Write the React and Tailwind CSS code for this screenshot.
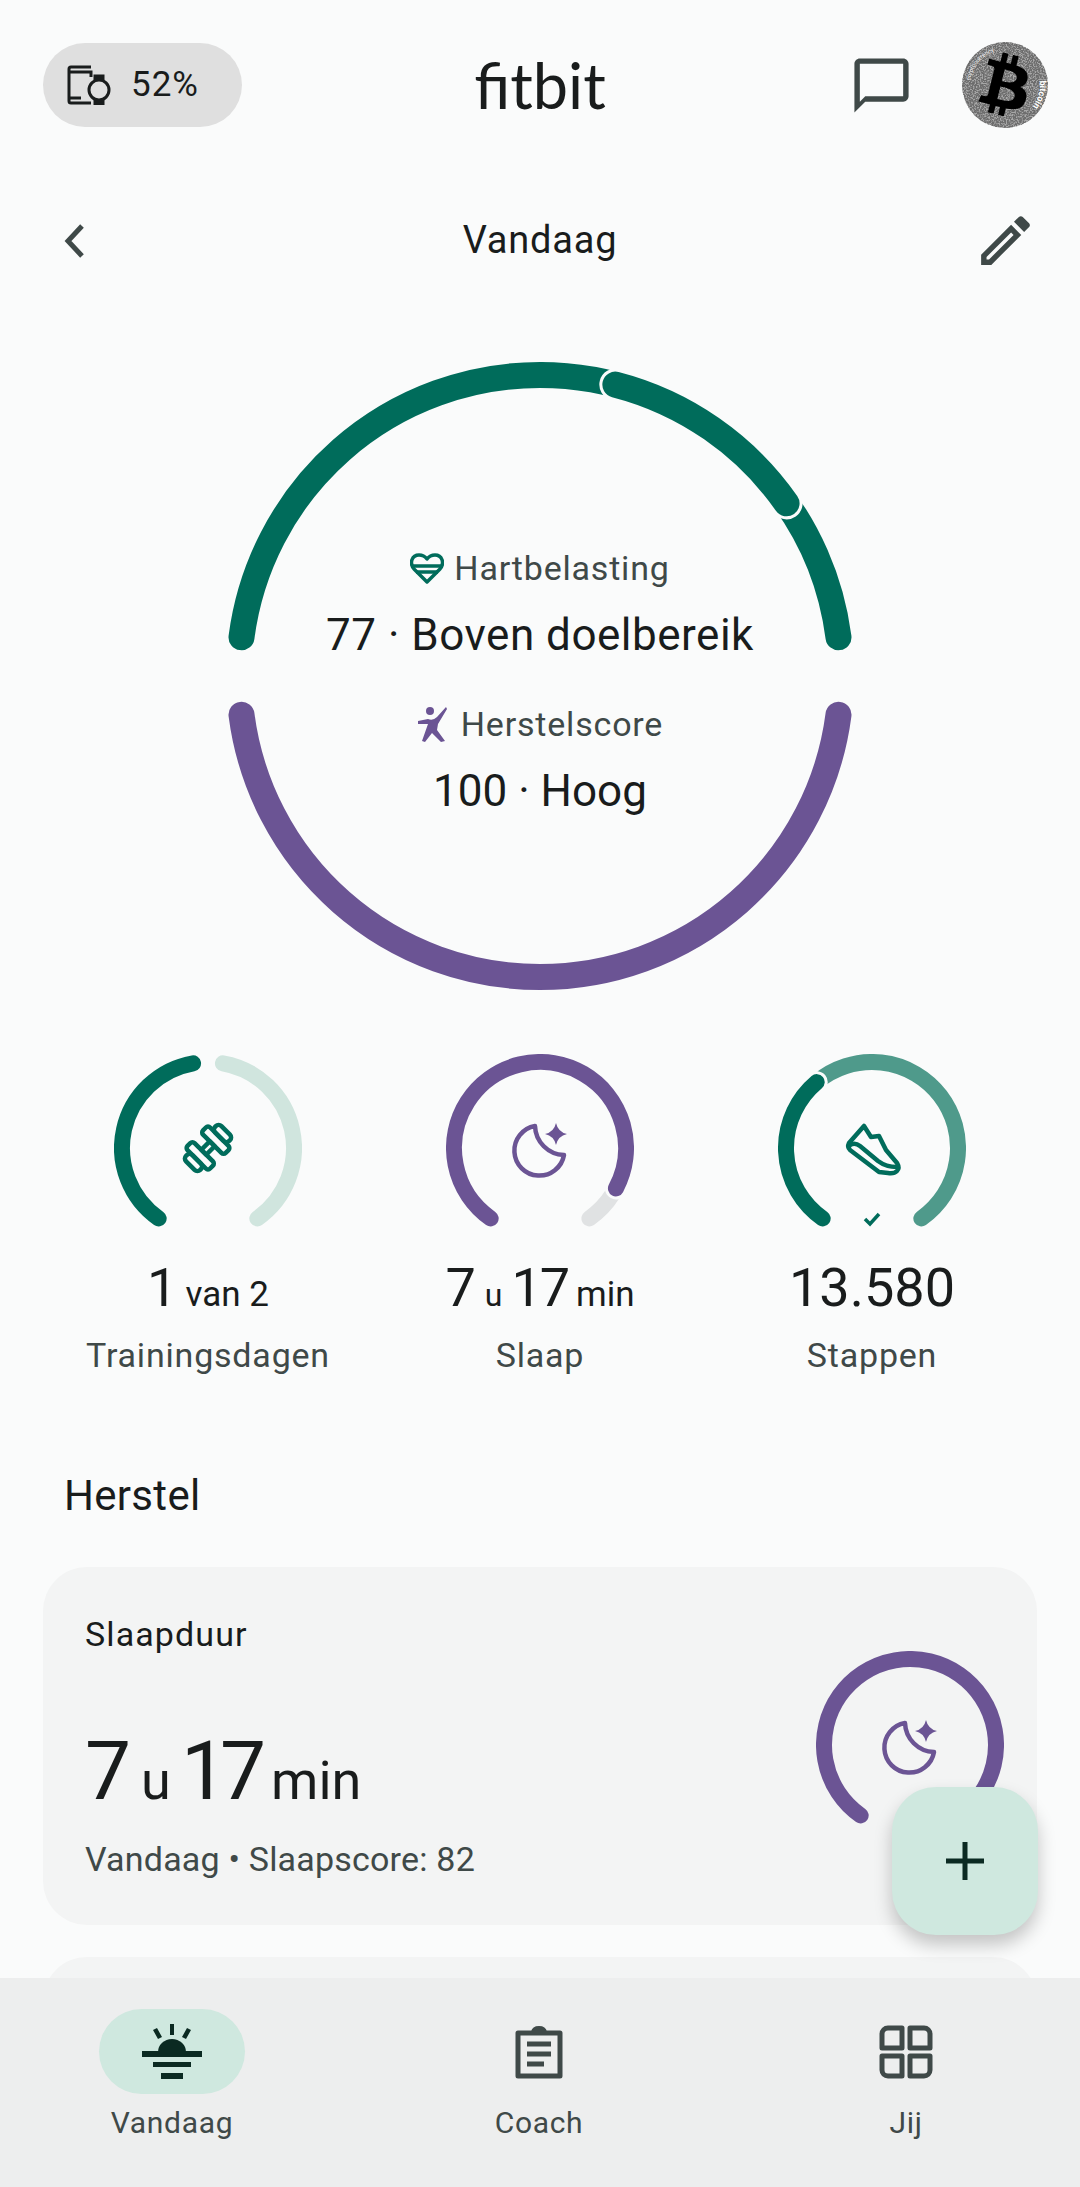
import React from "react";
import { FaBtc } from "react-icons/fa";

const GREEN = "#006c5b";
const PURPLE = "#6b5494";
const BG = "#fafbfb";

function arc(cx, cy, r, from, to) {
    const pt = (a) => {
        const rad = ((a - 90) * Math.PI) / 180;
        return `${cx + r * Math.cos(rad)} ${cy + r * Math.sin(rad)}`;
    };
    const large = to - from > 180 ? 1 : 0;
    return `M${pt(from)} A${r} ${r} 0 ${large} 1 ${pt(to)}`;
}

function Ring({ segments, halo, children }) {
    return (
        <svg width="188" height="188" viewBox="0 0 188 188" fill="none">
            {segments.map((s, i) => (
                <g key={i}>
                    {s.halo && (
                        <path d={arc(94, 94, 86, s.from, s.to)} stroke={halo} strokeWidth="22" strokeLinecap="round" />
                    )}
                    <path d={arc(94, 94, 86, s.from, s.to)} stroke={s.color} strokeWidth="16" strokeLinecap={s.cap || "round"} />
                </g>
            ))}
            {children}
        </svg>
    );
}

function MoonIcon() {
    return (
        <g transform="translate(68 69)" fill="none" stroke={PURPLE} strokeWidth="4.5" strokeLinejoin="round">
            <path d="M21 3A25 25 0 1 0 50 32A30 30 0 0 1 21 3Z" />
            <path d="M42 0Q44 9 53 11Q44 13 42 22Q40 13 31 11Q40 9 42 0Z" fill={PURPLE} stroke="none" />
        </g>
    );
}

function DumbbellIcon() {
    return (
        <g transform="translate(94 94) rotate(-45)" fill="none" stroke={GREEN} strokeWidth="4.5" strokeLinejoin="round">
            <rect x="-6" y="-3.5" width="12" height="7" />
            <rect x="-16" y="-16" width="10" height="32" rx="3" />
            <rect x="6" y="-16" width="10" height="32" rx="3" />
            <rect x="-25" y="-10" width="9" height="20" rx="4" />
            <rect x="16" y="-10" width="9" height="20" rx="4" />
        </g>
    );
}

function ShoeIcon() {
    return (
        <g transform="translate(70 71)" fill="none" stroke={GREEN} strokeWidth="4.5" strokeLinejoin="round" strokeLinecap="round">
            <path d="M16 1L23 12L31 11L38 25L49 38Q52 43 49 46Q46 49 40 48L31 47L2 25Q-1 22 1 18Z" />
            <path d="M2 20Q7 17 12 21L30 36Q38 42 49 42" />
        </g>
    );
}

function Stat({ segments, icon, extra, children, label }) {
    return (
        <div className="flex flex-col items-center">
            <Ring segments={segments} halo={BG}>
                {icon}
                {extra}
            </Ring>
            <div className="mt-[18px] flex h-[56px] items-baseline whitespace-nowrap text-[#191c1c]">{children}</div>
            <div className="mt-[19px] text-[34px] leading-[40px] tracking-[0.8px] text-[#3f4948]">{label}</div>
        </div>
    );
}

function Avatar() {
    return (
        <div className="relative -mr-[11px] h-[86px] w-[86px]">
            <svg className="rounded-full" width="86" height="86" viewBox="0 0 86 86">
                <defs>
                    <filter id="grain" x="0" y="0" width="100%" height="100%">
                        <feTurbulence type="fractalNoise" baseFrequency="0.7" numOctaves="2" seed="4" />
                        <feColorMatrix values="0 0 0 0 0.15  0 0 0 0 0.15  0 0 0 0 0.15  3 3 0 0 -2.3" />
                    </filter>
                    <path id="coinEdge" d="M8 43A35 35 0 1 1 78 43A35 35 0 1 1 8 43" />
                </defs>
                <circle cx="43" cy="43" r="43" fill="#a8a8a8" />
                <rect width="86" height="86" filter="url(#grain)" />
                <text fontSize="9" fill="#fff" fontFamily="Roboto, sans-serif" fontWeight="700">
                    <textPath href="#coinEdge" startOffset="48%">bitcoin</textPath>
                </text>
                <text fontSize="6" fill="#eee" fontFamily="Roboto, sans-serif">
                    <textPath href="#coinEdge" startOffset="2%">cryptocurrency</textPath>
                </text>
            </svg>
            <FaBtc className="absolute left-[13px] top-[12px] h-[62px] w-[62px] rotate-[14deg] text-black" />
        </div>
    );
}

export default function App() {
    return (
        <div className="flex h-[2187px] w-[1080px] flex-col overflow-hidden bg-[#fafbfb] font-['Roboto',sans-serif]">
            <main className="relative min-h-0 flex-1 overflow-hidden">
                {/* Top bar */}
                <div className="grid grid-cols-[1fr_auto_1fr] items-center px-[43px] pt-[42px]">
                    <div className="flex h-[84px] w-[199px] items-center gap-[18px] rounded-full bg-[#dfdfdf] pl-[24px]">
                        <svg width="46" height="40" viewBox="0 0 46 40" fill="none" stroke="#191c1c" strokeWidth="3">
                            <path d="M24 2H4a2 2 0 0 0-2 2v32a2 2 0 0 0 2 2h20" />
                            <path d="M3 7H24V12" />
                            <path d="M3 33H14" />
                            <circle cx="32" cy="25" r="10" />
                            <path d="M28 15V11H36V15M28 35V39H36V35" fill="#191c1c" />
                        </svg>
                        <span className="text-[35px] tracking-[1px] text-[#191c1c]">52%</span>
                    </div>
                    <div className="font-['Lato',sans-serif] text-[63px] leading-[84px] text-[#191c1c]">fitbit</div>
                    <div className="flex items-center justify-end gap-[48px]">
                        <svg width="65" height="65" viewBox="0 0 24 24" fill="#3f4948">
                            <path d="M20 2H4c-1.1 0-2 .9-2 2v18l4-4h14c1.1 0 2-.9 2-2V4c0-1.1-.9-2-2-2zm0 14H6l-2 2V4h16v12z" />
                        </svg>
                        <Avatar />
                    </div>
                </div>

                {/* Date row */}
                <div className="mt-[80px] grid grid-cols-[1fr_auto_1fr] items-center px-[60px]">
                    <svg width="28" height="36" viewBox="0 0 28 36" fill="none" stroke="#3f4948" strokeWidth="5">
                        <path d="M22 3L8 18L22 33" />
                    </svg>
                    <div className="text-[38px] leading-[65px] tracking-[0.8px] text-[#191c1c]">Vandaag</div>
                    <svg className="-mr-[18px] justify-self-end" width="65" height="65" viewBox="0 0 24 24" fill="#3f4948">
                        <path d="M3 17.25V21h3.75L17.81 9.94l-3.75-3.75L3 17.25zM5.92 19H5v-.92l9.06-9.06.92.92L5.92 19zM20.71 7.04c.39-.39.39-1.02 0-1.41l-2.34-2.34c-.2-.2-.45-.29-.71-.29s-.51.1-.7.28l-1.83 1.83 3.75 3.75 1.83-1.82z" />
                    </svg>
                </div>

                {/* Main ring */}
                <section className="relative mt-[88px] h-[636px] w-[1080px]">
                    <svg className="absolute inset-0" width="1080" height="636" viewBox="0 0 1080 636" fill="none">
                        <path d={arc(540, 315, 301, 277.4, 360)} stroke={GREEN} strokeWidth="26" strokeLinecap="round" />
                        <path d={arc(540, 315, 301, 0, 20)} stroke={GREEN} strokeWidth="26" />
                        <path d={arc(540, 315, 301, 50, 82.6)} stroke={GREEN} strokeWidth="26" strokeLinecap="round" />
                        <path d={arc(540, 315, 301, 14.5, 55)} stroke={BG} strokeWidth="32" strokeLinecap="round" />
                        <path d={arc(540, 315, 301, 14.5, 55)} stroke={GREEN} strokeWidth="26" strokeLinecap="round" />
                        <path d={arc(540, 315, 301, 97.4, 262.6)} stroke={PURPLE} strokeWidth="26" strokeLinecap="round" />
                    </svg>
                    <div className="relative flex flex-col items-center pt-[187px]">
                        <div className="flex h-[40px] items-center gap-[10px] text-[34px] tracking-[0.8px] text-[#3f4948]">
                            <svg width="34" height="31" viewBox="0 0 34 31" fill="none" stroke={GREEN} strokeWidth="3.5">
                                <path d="M17 29L4 16C-1 10 2 2 9 2C13 2 15.5 4 17 6C18.5 4 21 2 25 2C32 2 35 10 30 16Z" strokeLinejoin="round" />
                                <path d="M2 13H32M6 19H28" />
                            </svg>
                            <span>Hartbelasting</span>
                        </div>
                        <div className="mt-[21px] h-[52px] text-[44px] leading-[52px] tracking-[0.5px] text-[#191c1c]">77 · Boven doelbereik</div>
                        <div className="mt-[43px] flex h-[40px] items-center gap-[14px] text-[34px] tracking-[0.8px] text-[#3f4948]">
                            <svg width="30" height="36" viewBox="0 0 30 36" fill={PURPLE}>
                                <circle cx="13" cy="5" r="4" />
                                <path d="M1 15L11 13Q16 15 20 11L29 1L30 3L21 18L20 24L28 35L24 36L15 27L8 36L5 35L11 18L1 18Z" />
                            </svg>
                            <span>Herstelscore</span>
                        </div>
                        <div className="mt-[21px] h-[52px] text-[44px] leading-[52px] text-[#191c1c]">100 · Hoog</div>
                    </div>
                </section>

                {/* Goals */}
                <section className="mt-[57px] grid grid-cols-3 px-[42px]">
                    <Stat
                        label="Trainingsdagen"
                        icon={<DumbbellIcon />}
                        segments={[
                            { from: 10, to: 145, color: "#d0e5de" },
                            { from: 215, to: 350, color: GREEN },
                        ]}
                    >
                        <span className="text-[54px] leading-[56px]">1</span>
                        <span className="ml-[8px] text-[35px] leading-[56px]">van 2</span>
                    </Stat>
                    <Stat
                        label="Slaap"
                        icon={<MoonIcon />}
                        segments={[
                            { from: 122, to: 145, color: "#e0e2e3" },
                            { from: -145, to: 118, color: PURPLE, halo: true },
                        ]}
                    >
                        <span className="text-[54px] leading-[56px]">7</span>
                        <span className="mx-[9px] text-[32px] leading-[56px]">u</span>
                        <span className="text-[54px] leading-[56px] tracking-[-2px]">17</span>
                        <span className="ml-[8px] text-[35px] leading-[56px]">min</span>
                    </Stat>
                    <Stat
                        label="Stappen"
                        icon={<ShoeIcon />}
                        extra={<path d="M87 165L92 170L101 160" fill="none" stroke={GREEN} strokeWidth="3.5" />}
                        segments={[
                            { from: -40, to: 145, color: "#4f9a8b" },
                            { from: -145, to: -40, color: GREEN, halo: true },
                        ]}
                    >
                        <span className="text-[54px] leading-[56px]">13.580</span>
                    </Stat>
                </section>

                <h2 className="mt-[97px] pl-[64px] text-[42px] font-normal leading-[48px] tracking-[0.3px] text-[#191c1c]">Herstel</h2>

                {/* Sleep card */}
                <div className="mx-[43px] mt-[47px] flex h-[358px] justify-between rounded-[44px] bg-[#f3f4f4] pl-[42px] pr-[33px]">
                    <div>
                        <div className="mt-[47px] text-[34px] leading-[40px] tracking-[1.1px] text-[#191c1c]">Slaapduur</div>
                        <div className="mt-[69px] flex h-[96px] items-baseline text-[#191c1c]">
                            <span className="text-[82px] leading-[96px]">7</span>
                            <span className="ml-[10px] mr-[10px] text-[54px] leading-[96px]">u</span>
                            <span className="text-[82px] leading-[96px] tracking-[-7px]">17</span>
                            <span className="ml-[12px] text-[54px] leading-[96px]">min</span>
                        </div>
                        <div className="mt-[20px] text-[34px] leading-[40px] tracking-[0.2px] text-[#3f4948]">Vandaag • Slaapscore: 82</div>
                    </div>
                    <div className="pt-[84px]">
                        <Ring segments={[{ from: -145, to: 125, color: PURPLE }]}>
                            <MoonIcon />
                        </Ring>
                    </div>
                </div>

                <div className="mx-[43px] mt-[32px] h-[300px] rounded-[44px] bg-[#f3f4f4]" />

                {/* Add button */}
                <button className="absolute left-[892px] top-[1787px] flex h-[148px] w-[146px] items-center justify-center rounded-[44px] bg-[#cfe8df] shadow-[0_10px_18px_rgba(0,0,0,0.22)]">
                    <svg width="38" height="38" viewBox="0 0 38 38" stroke="#0b2a22" strokeWidth="5">
                        <path d="M19 0V38M0 19H38" />
                    </svg>
                </button>
            </main>

            {/* Bottom nav */}
            <nav className="relative flex h-[209px] justify-between bg-[#edeeee] pl-[99px] pr-[101px] pt-[31px]">
                <div className="flex w-[146px] flex-col items-center">
                    <div className="flex h-[85px] w-[146px] items-center justify-center rounded-full bg-[#cfe8df]">
                        <svg width="60" height="56" viewBox="0 0 60 56" fill="#0b2a22">
                            <rect x="28" y="0" width="4" height="11" />
                            <path d="M11 6L15 4L20 13L16 15ZM49 6L45 4L40 13L44 15Z" />
                            <path d="M16 28A14 13 0 0 1 44 28Z" />
                            <rect x="0" y="27" width="60" height="6" />
                            <rect x="11" y="38" width="38" height="5" />
                            <rect x="19" y="49" width="22" height="6" />
                        </svg>
                    </div>
                    <span className="mt-[9px] text-[30px] leading-[40px] tracking-[0.7px] text-[#3f4948]">Vandaag</span>
                </div>
                <div className="flex w-[146px] flex-col items-center">
                    <div className="flex h-[85px] items-center justify-center">
                        <svg width="48" height="54" viewBox="0 0 48 54" fill="none" stroke="#3f4948" strokeWidth="5">
                            <path d="M3 8H45V51H3Z" strokeLinejoin="round" />
                            <path d="M17 7Q18 2 24 2Q30 2 31 7Z" fill="#3f4948" strokeWidth="2" />
                            <path d="M12 19H36M12 29H36M12 39H29" />
                        </svg>
                    </div>
                    <span className="mt-[9px] text-[30px] leading-[40px] tracking-[0.7px] text-[#3f4948]">Coach</span>
                </div>
                <div className="flex w-[146px] flex-col items-center">
                    <div className="flex h-[85px] items-center justify-center">
                        <svg width="54" height="54" viewBox="0 0 54 54" fill="none" stroke="#3f4948" strokeWidth="5" strokeLinejoin="round">
                            <path d="M9 3H23V23H3V9A6 6 0 0 1 9 3Z" />
                            <path d="M31 3H45A6 6 0 0 1 51 9V23H31Z" />
                            <path d="M3 31H23V51H9A6 6 0 0 1 3 45Z" />
                            <path d="M31 31H51V45A6 6 0 0 1 45 51H31Z" />
                        </svg>
                    </div>
                    <span className="mt-[9px] text-[30px] leading-[40px] tracking-[0.7px] text-[#3f4948]">Jij</span>
                </div>
            </nav>
        </div>
    );
}
